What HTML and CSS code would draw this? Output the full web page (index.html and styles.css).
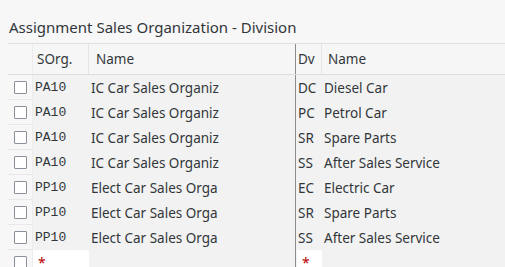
FILE: index.html
```html
<!DOCTYPE html>
<html>
<head>
<meta charset="utf-8">
<link rel="stylesheet" href="styles.css">
</head>
<body>
<h1 class="title">Assignment Sales Organization - Division</h1>
<div class="table">
  <div class="row head">
    <div class="c sel"></div>
    <div class="c org">SOrg.</div>
    <div class="c oname">Name</div>
    <div class="c dv">Dv</div>
    <div class="c dname">Name</div>
  </div>
  <div class="row"><div class="c sel"><span class="box"></span></div><div class="c org mono">PA10</div><div class="c oname">IC Car Sales Organiz</div><div class="c dv">DC</div><div class="c dname">Diesel Car</div></div>
  <div class="row"><div class="c sel"><span class="box"></span></div><div class="c org mono">PA10</div><div class="c oname">IC Car Sales Organiz</div><div class="c dv">PC</div><div class="c dname">Petrol Car</div></div>
  <div class="row"><div class="c sel"><span class="box"></span></div><div class="c org mono">PA10</div><div class="c oname">IC Car Sales Organiz</div><div class="c dv">SR</div><div class="c dname">Spare Parts</div></div>
  <div class="row"><div class="c sel"><span class="box"></span></div><div class="c org mono">PA10</div><div class="c oname">IC Car Sales Organiz</div><div class="c dv">SS</div><div class="c dname">After Sales Service</div></div>
  <div class="row"><div class="c sel"><span class="box"></span></div><div class="c org mono">PP10</div><div class="c oname">Elect Car Sales Orga</div><div class="c dv">EC</div><div class="c dname">Electric Car</div></div>
  <div class="row"><div class="c sel"><span class="box"></span></div><div class="c org mono">PP10</div><div class="c oname">Elect Car Sales Orga</div><div class="c dv">SR</div><div class="c dname">Spare Parts</div></div>
  <div class="row"><div class="c sel"><span class="box"></span></div><div class="c org mono">PP10</div><div class="c oname">Elect Car Sales Orga</div><div class="c dv">SS</div><div class="c dname">After Sales Service</div></div>
  <div class="row new"><div class="c sel"><span class="box"></span></div><div class="c org"><span class="inp"><span class="req">*</span></span></div><div class="c oname"></div><div class="c dv"><span class="inp"><span class="req">*</span></span></div><div class="c dname"></div></div>
</div>
</body>
</html>
```
FILE: styles.css
```css
html, body { margin: 0; padding: 0; }
body {
  background: #f7f7f7;
  font-family: "Noto Sans", "Liberation Sans", sans-serif;
  color: #32363a;
  width: 505px;
  height: 267px;
  overflow: hidden;
}
.title {
  margin: 0;
  padding: 17px 0 0 9px;
  height: 26px;
  font-size: 15px;
  font-weight: normal;
  line-height: 20px;
  color: #32363a;
}
.table {
  margin-left: 8px;
  border-top: 1px solid #e0e0e0;
  background: #f1f2f1;
}
.row {
  display: flex;
  height: 25px;
  align-items: stretch;
}
.row.head {
  height: 30px;
  background: #f6f6f6;
  border-bottom: 1px solid #dedede;
}
.c {
  display: flex;
  align-items: center;
  font-size: 13.5px;
  white-space: nowrap;
  overflow: hidden;
}
.sel {
  width: 25px;
  justify-content: center;
  background: #f7f7f7;
  border-right: 1px solid #ececec;
  border-bottom: 1px solid #e8e8e8;
  box-sizing: border-box;
}
.head .sel { border-bottom: none; }
.box {
  width: 13px;
  height: 13px;
  border: 1px solid #8a9098;
  background: #fff;
  border-radius: 1px;
  box-sizing: border-box;
}
.org { width: 56px; padding-left: 2px; box-sizing: border-box; }
.head .org { padding-left: 4px; border-right: 1px solid #e5e5e5; }
.mono { font-family: "Liberation Mono", "DejaVu Sans Mono", monospace; font-size: 13px; }
.oname { width: 207px; padding-left: 2px; box-sizing: border-box; border-right: 1px solid #8b8b8b; }
.head .oname { padding-left: 7px; }
.dv { width: 26px; padding-left: 2px; box-sizing: border-box; }
.head .dv { border-right: 1px solid #e5e5e5; }
.dname { flex: 1; padding-left: 2px; }
.head .dname { padding-left: 6px; }
.inp {
  display: flex;
  align-items: center;
  background: #fff;
  height: 100%;
  width: 100%;
  padding-left: 5px;
  box-sizing: border-box;
}
.new .org { padding-left: 0; }
.new .dv { padding-left: 1px; }
.req { color: #bb0000; font-size: 14px; }
```
